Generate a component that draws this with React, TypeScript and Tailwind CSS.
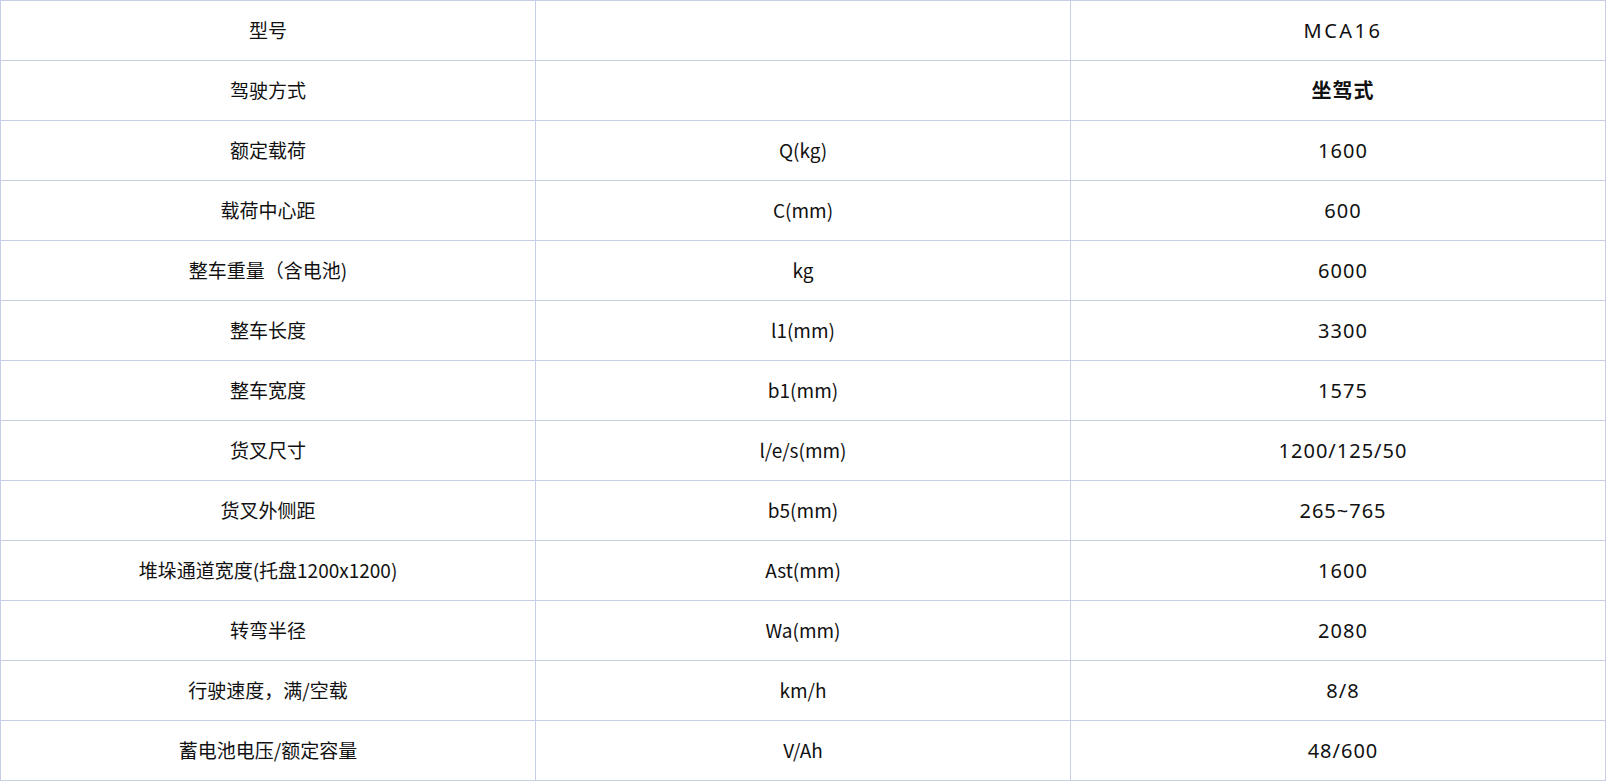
import React from 'react';

type Row = { name: string; unit: string; value: string; bold?: boolean; wide?: boolean };

const rows: Row[] = [
  { name: '型号', unit: '', value: 'MCA16', wide: true },
  { name: '驾驶方式', unit: '', value: '坐驾式', bold: true },
  { name: '额定载荷', unit: 'Q(kg)', value: '1600' },
  { name: '载荷中心距', unit: 'C(mm)', value: '600' },
  { name: '整车重量（含电池)', unit: 'kg', value: '6000' },
  { name: '整车长度', unit: 'l1(mm)', value: '3300' },
  { name: '整车宽度', unit: 'b1(mm)', value: '1575' },
  { name: '货叉尺寸', unit: 'l/e/s(mm)', value: '1200/125/50' },
  { name: '货叉外侧距', unit: 'b5(mm)', value: '265~765' },
  { name: '堆垛通道宽度(托盘1200x1200)', unit: 'Ast(mm)', value: '1600' },
  { name: '转弯半径', unit: 'Wa(mm)', value: '2080' },
  { name: '行驶速度，满/空载', unit: 'km/h', value: '8/8' },
  { name: '蓄电池电压/额定容量', unit: 'V/Ah', value: '48/600' },
];

const cell =
  'h-[60px] flex items-center justify-center border-r border-b border-[#c8cee6] text-[#111]';

export default function App() {
  return (
    <div className="w-[1606px] bg-white">
      <div className="grid grid-cols-3 border-t border-l border-[#c8cee6]">
        {rows.map((r, i) => (
          <React.Fragment key={i}>
            <div className={cell + " text-[19px] font-['Noto_Sans_CJK_SC',sans-serif]"}>{r.name}</div>
            <div className={cell + " text-[19px] font-['Noto_Sans_CJK_SC',sans-serif]"}>{r.unit}</div>
            <div
              className={
                cell +
                " pl-[10px] text-[20px] font-['Noto_Sans','Noto_Sans_CJK_SC',sans-serif] " +
                (r.wide ? 'tracking-[2.5px] ' : 'tracking-[1px] ') +
                (r.bold ? 'font-bold' : '')
              }
            >
              {r.value}
            </div>
          </React.Fragment>
        ))}
      </div>
    </div>
  );
}
